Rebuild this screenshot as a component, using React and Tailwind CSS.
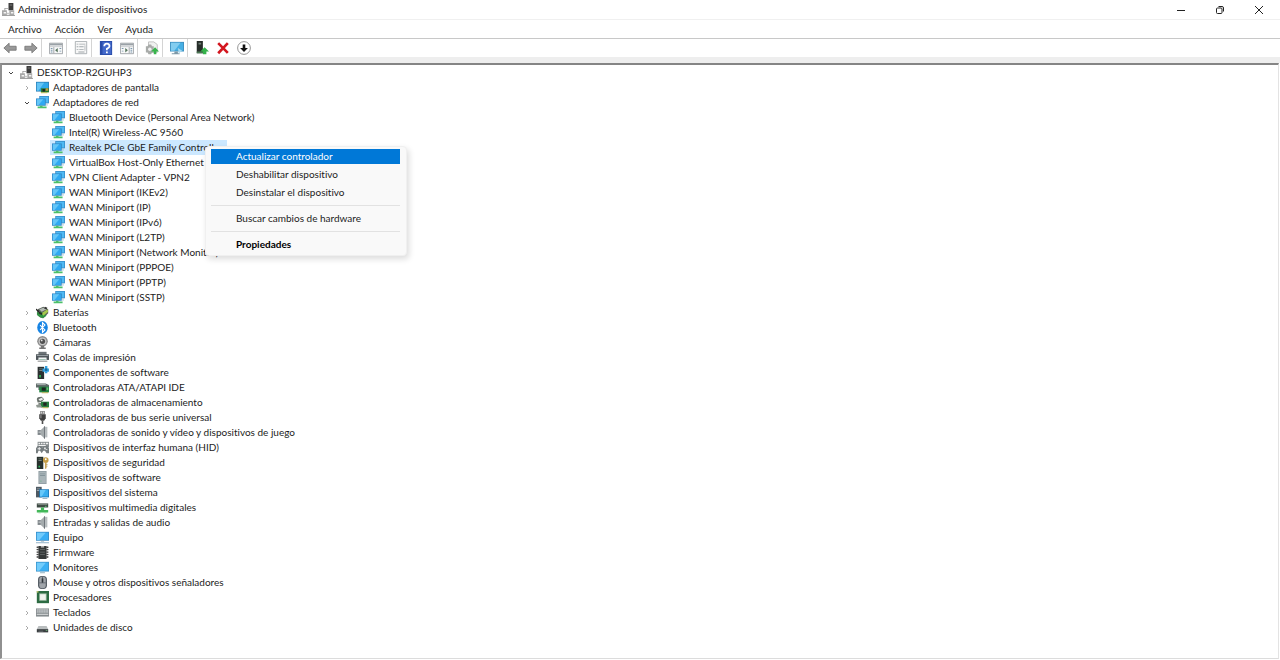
import React from 'react';

const NODES = [
  { label: 'Adaptadores de pantalla', icon: 'display' },
  {
    label: 'Adaptadores de red',
    icon: 'network',
    children: [
      'Bluetooth Device (Personal Area Network)',
      'Intel(R) Wireless-AC 9560',
      'Realtek PCIe GbE Family Controller',
      'VirtualBox Host-Only Ethernet Adapter',
      'VPN Client Adapter - VPN2',
      'WAN Miniport (IKEv2)',
      'WAN Miniport (IP)',
      'WAN Miniport (IPv6)',
      'WAN Miniport (L2TP)',
      'WAN Miniport (Network Monitor)',
      'WAN Miniport (PPPOE)',
      'WAN Miniport (PPTP)',
      'WAN Miniport (SSTP)',
    ],
  },
  { label: 'Baterías', icon: 'battery' },
  { label: 'Bluetooth', icon: 'bluetooth' },
  { label: 'Cámaras', icon: 'camera' },
  { label: 'Colas de impresión', icon: 'printer' },
  { label: 'Componentes de software', icon: 'component' },
  { label: 'Controladoras ATA/ATAPI IDE', icon: 'ide' },
  { label: 'Controladoras de almacenamiento', icon: 'storage' },
  { label: 'Controladoras de bus serie universal', icon: 'usb' },
  { label: 'Controladoras de sonido y vídeo y dispositivos de juego', icon: 'speaker' },
  { label: 'Dispositivos de interfaz humana (HID)', icon: 'hid' },
  { label: 'Dispositivos de seguridad', icon: 'security' },
  { label: 'Dispositivos de software', icon: 'software' },
  { label: 'Dispositivos del sistema', icon: 'system' },
  { label: 'Dispositivos multimedia digitales', icon: 'media' },
  { label: 'Entradas y salidas de audio', icon: 'speaker' },
  { label: 'Equipo', icon: 'computer' },
  { label: 'Firmware', icon: 'firmware' },
  { label: 'Monitores', icon: 'monitor' },
  { label: 'Mouse y otros dispositivos señaladores', icon: 'mouse' },
  { label: 'Procesadores', icon: 'cpu' },
  { label: 'Teclados', icon: 'keyboard' },
  { label: 'Unidades de disco', icon: 'disk' },
];

const SELECTED = 'Realtek PCIe GbE Family Controller';

const GLYPHS = {
  root: (
    <>
      <path d="M8 0h6v9H8z" fill="#3c3c3c" />
      <path d="M9.5 2h3v1h-3z" fill="#888" />
      <path d="M3 6h5v1H4v3H3z" fill="#999" />
      <path d="M0 9h6v6H0zM9 9h6v6H9z" fill="#a8a8a8" />
      <path d="M6 12h3v2H6z" fill="#c8c8c8" />
      <path d="M2 11h3v2H2zM11 11h3v2h-3z" fill="#f4f4f4" />
      <path d="M0 15h16v1H0z" fill="#8f8f8f" />
    </>
  ),
  display: (
    <>
      <path d="M0 1h16v12H0z" fill="#2f7fb5" />
      <path d="M1 2h14v10H1z" fill="#2fa8ea" />
      <path d="M1 2h9L3 12H1z" fill="#63c4f5" />
      <path d="M6 9h10v5H6z" fill="#267a35" />
      <path d="M8 10h3v3H8z" fill="#222" />
      <path d="M12 9h3v3h-3z" fill="#c4983c" />
      <path d="M6 14h8v1H6z" fill="#b8b13a" />
    </>
  ),
  network: (
    <>
      <path d="M4 0h12v9H4z" fill="#3a8fcb" />
      <path d="M5 1h10v7H5z" fill="#4fb9f3" />
      <path d="M0 3h12v9H0z" fill="#3186c4" />
      <path d="M1 4h10v7H1z" fill="#2fa9f2" />
      <path d="M1 4h8L3 11H1z" fill="#64c6f8" />
      <path d="M5 12h3v1h5v2H2v-2h3z" fill="#4cc06a" />
      <path d="M13 9h1v3h-1z" fill="#8fb3c8" />
    </>
  ),
  battery: (
    <>
      <path d="M2 4l7-3 6 3v5l-6 6-4-1-4-4z" fill="#5c635c" />
      <path d="M4 4l5-2 4 2-6 3z" fill="#b3bab3" />
      <path d="M1 8l5-1 7 5-5 3-6-3z" fill="#2f9442" />
      <path d="M7 9l7-5 1 3-6 5z" fill="#a6c94d" />
      <path d="M0 3l4 3-1 2-3-3z" fill="#222" />
      <path d="M4 7l4 2-1 2-4-2z" fill="#262a26" />
      <path d="M11 1l3 1-1 2-3-1z" fill="#333" />
    </>
  ),
  bluetooth: (
    <>
      <ellipse cx="8" cy="8" rx="6.5" ry="8" fill="#1784e4" />
      <path d="M5 5l6 6-3 3V2l3 3-6 6" fill="none" stroke="#fff" strokeWidth="1.4" />
    </>
  ),
  camera: (
    <>
      <circle cx="8" cy="6.5" r="6.5" fill="#8b8b8b" />
      <circle cx="8" cy="6.5" r="4.8" fill="#c4c4c4" />
      <circle cx="8" cy="6.5" r="3.2" fill="#505050" />
      <circle cx="7" cy="5.5" r="1.1" fill="#e8e8e8" />
      <path d="M6 12h4v2h2v2H4v-2h2z" fill="#747474" />
    </>
  ),
  printer: (
    <>
      <path d="M3 1h10v4H3z" fill="#6d7478" />
      <path d="M0 4h16v7H0z" fill="#50575b" />
      <path d="M1 5h14v1H1z" fill="#a8b0b4" />
      <path d="M3 8h10v5H3z" fill="#f2f5f6" />
      <path d="M4 10h8v1H4z" fill="#91b7a5" />
      <path d="M2 12h12v1H2z" fill="#777" />
    </>
  ),
  component: (
    <>
      <path d="M2 1h8v15H2z" fill="#2b3030" />
      <path d="M4 3h4v1H4zM4 5h4v1H4z" fill="#7d8888" />
      <path d="M4 11h2v3H4z" fill="#35bd58" />
      <path d="M11 0h3v3h2v4h-2v2h-3V7H8V3h3z" fill="#38a2df" />
      <path d="M11 3h3v3h-3z" fill="#17699c" />
    </>
  ),
  ide: (
    <>
      <path d="M0 3h12l4 2v6H3V8H0z" fill="#5e6968" />
      <path d="M1 4h11v1H1z" fill="#b5bfbd" />
      <path d="M4 7h12v7H4z" fill="#238442" />
      <path d="M7 8h5v4H7z" fill="#1d2522" />
      <path d="M13 8h2v3h-2z" fill="#69bb73" />
      <path d="M7 14h8v1H7z" fill="#b9a43a" />
    </>
  ),
  storage: (
    <>
      <path d="M1 4q0-3 6-3l3 3-3 3-5 1z" fill="#69716b" />
      <path d="M3 4l4-2 2 2-4 2z" fill="#f0f0f0" />
      <path d="M3 8l4 1v2H3z" fill="#7b837d" />
      <path d="M6 7h10v7H6z" fill="#267e3e" />
      <path d="M9 8h4v4H9z" fill="#202522" />
      <path d="M0 11l5-1 3 4H1z" fill="#909891" />
      <path d="M8 14h7v1H8z" fill="#c1a939" />
    </>
  ),
  usb: (
    <>
      <path d="M5 0h6v4H5z" fill="#8d8d8d" />
      <path d="M6 1h1v2H6zM9 1h1v2H9z" fill="#eee" />
      <path d="M4 4h8v5l-2 3H6l-2-3z" fill="#3f3f3f" />
      <path d="M5 5h2v4H5z" fill="#777" />
      <path d="M7 12h2v4H7z" fill="#4f4f4f" />
    </>
  ),
  speaker: (
    <>
      <path d="M2 5h4v6H2z" fill="#7f868a" />
      <path d="M6 5l5-5v16l-5-5z" fill="#a5abad" />
      <path d="M10 1l1-1v16l-1-1z" fill="#5f666a" />
      <path d="M11 1h3v13h-3z" fill="#b9bec0" />
      <path d="M3 7h3v1H3z" fill="#dde0e1" />
    </>
  ),
  hid: (
    <>
      <path d="M2 1h14v7H2z" fill="#858b8d" />
      <path d="M3 2h2v2H3zM6 2h2v2H6zM9 2h2v2H9zM12 2h3v2h-3zM3 5h9v1H3z" fill="#f2f2f2" />
      <path d="M0 9l2-3h4l2 2 2-2h4l2 3v6h-3l-2-3h-2l-2 3-2-3H3l-1 3H0z" fill="#777e80" />
      <path d="M2 9h4v1H2zM3.5 7.5h1v4h-1zM10 8h2v2h-2zM12 10h2v1h-2z" fill="#eee" />
    </>
  ),
  security: (
    <>
      <path d="M1 1h8v15H1z" fill="#28312d" />
      <path d="M3 3h4v1H3zM3 5h4v1H3z" fill="#75817b" />
      <path d="M3 12h2v2H3z" fill="#30b961" />
      <circle cx="12" cy="5" r="3.5" fill="#c49c45" />
      <circle cx="12" cy="4" r="1.1" fill="#fff" />
      <path d="M11 8h2v7l-2 1z" fill="#caa456" />
      <path d="M13 10h1v1h-1zM13 12h1v1h-1z" fill="#8c6a24" />
    </>
  ),
  software: (
    <>
      <path d="M3 0h10v16H3z" fill="#909da3" />
      <path d="M4 1h8v14H4z" fill="#a8b4b8" />
      <path d="M5 3h6v1H5zM5 5h6v1H5z" fill="#83939a" />
      <path d="M5 12h2v1H5z" fill="#78b592" />
    </>
  ),
  system: (
    <>
      <path d="M0 1h7v13H0z" fill="#4e5962" />
      <path d="M1 3h4v1H1zM1 5h4v1H1z" fill="#9ba6ae" />
      <path d="M4 4h12v10H4z" fill="#1a79b9" />
      <path d="M5 5h10v8H5z" fill="#36aef0" />
      <path d="M5 5h7l-5 8H5z" fill="#65c8fa" />
      <path d="M8 15h6v1H8z" fill="#88a5b6" />
    </>
  ),
  media: (
    <>
      <path d="M1 3h14v5H1z" fill="#3d4942" />
      <path d="M2 4h12v1H2z" fill="#8c9890" />
      <path d="M11 6h2v1h-2z" fill="#54d678" />
      <path d="M6 8h4v3h5v3H1v-3h5z" fill="#43b859" />
      <path d="M3 14h3v1H3zM10 14h3v1h-3z" fill="#8cd59a" />
    </>
  ),
  computer: (
    <>
      <path d="M0 1h16v11H0z" fill="#378ac5" />
      <path d="M1 2h14v9H1z" fill="#39adf4" />
      <path d="M1 2h11L4 11H1z" fill="#70cafb" />
      <path d="M6 12h4v1H6z" fill="#8ba4b2" />
      <path d="M0 14h16v1H0z" fill="#779fba" />
    </>
  ),
  firmware: (
    <>
      <path d="M3 0h10v16H3z" fill="#343838" />
      <path d="M1 1h2v1H1zM1 4h2v1H1zM1 7h2v1H1zM1 10h2v1H1zM1 13h2v1H1zM13 1h2v1h-2zM13 4h2v1h-2zM13 7h2v1h-2zM13 10h2v1h-2zM13 13h2v1h-2z" stroke="#555" strokeWidth=".5" />
      <path d="M6 0h4v2H6z" fill="#aaa" />
      <path d="M5 4h6v1H5zM5 7h6v1H5zM5 10h6v1H5z" fill="#686e6e" />
    </>
  ),
  monitor: (
    <>
      <path d="M0 1h16v12H0z" fill="#3b91c7" />
      <path d="M1 2h14v10H1z" fill="#3cb0f4" />
      <path d="M1 2h11L4 12H1z" fill="#72ccfb" />
      <path d="M5 14h6v1H5z" fill="#7aa0b4" />
    </>
  ),
  mouse: (
    <>
      <rect x="2.5" y="0" width="11" height="16" rx="4.5" fill="#525a62" />
      <rect x="4" y="1" width="8" height="14" rx="3.5" fill="#a0a5aa" />
      <path d="M7.5 1h1v7h-1zM4 8h8v1H4z" fill="#555d65" />
      <path d="M7 3h2v5H7z" fill="#30363c" />
    </>
  ),
  cpu: (
    <>
      <path d="M1 0h15v15H1z" fill="#2c6b42" />
      <path d="M4 3h9v9H4z" fill="#a9c2ae" />
      <path d="M5 4h7v7H5z" fill="#f0f3ee" />
      <path d="M1 0h2v2H1z" fill="#b5be65" />
    </>
  ),
  keyboard: (
    <>
      <path d="M0 3h16v10H0z" fill="#858b8e" />
      <path d="M1 4h14v5H1z" fill="#c0c4c6" />
      <path d="M1 6h14M1 8h14M3 4v5M6 4v5M9 4v5M12 4v5" stroke="#979da0" strokeWidth=".6" />
      <path d="M1 10h14v1H1z" fill="#dadddd" />
    </>
  ),
  disk: (
    <>
      <path d="M3 6h10l2 4H1z" fill="#b9bdbe" />
      <path d="M1 10h14v4H1z" fill="#383d3f" />
      <path d="M3 12h6v1H3z" fill="#737a7d" />
      <path d="M12 11h2v1h-2z" fill="#77bd82" />
    </>
  ),
};

const TOOLS = {
  back: <path d="M1 8l6-5.5v3.500h8v4.500H7V13.500z" fill="#999" stroke="#777" strokeWidth="1" />,
  forward: <path d="M15 8L9 2.500v3.500H1v4.500h8V13.500z" fill="#999" stroke="#777" strokeWidth="1" />,
  tree: (
    <>
      <path d="M.5 2.500h15v12H.5z" fill="#f8f8f8" stroke="#9a9fa3" />
      <path d="M1 3h14v2H1z" fill="#9aa1a7" />
      <path d="M1 6h14v1H1z" fill="#c5c9cc" />
      <path d="M5.500 7v7" stroke="#9a9fa3" />
      <path d="M2 8h2v1H2zM2 10h2v1H2zM2 12h2v1H2zM12 8h2v1h-2zM12 11h2v1h-2z" fill="#7c99af" />
      <path d="M10 8v5l-3-2.500z" fill="#53735b" />
    </>
  ),
  actions: (
    <>
      <path d="M.5 2.500h15v12H.5z" fill="#f8f8f8" stroke="#9a9fa3" />
      <path d="M1 3h14v2H1z" fill="#9aa1a7" />
      <path d="M1 6h14v1H1z" fill="#c5c9cc" />
      <path d="M10.500 7v7" stroke="#9a9fa3" />
      <path d="M2 8h2v1H2zM2 11h2v1H2zM12 8h2v1h-2zM12 10h2v1h-2zM12 12h2v1h-2z" fill="#7c99af" />
      <path d="M6 8v5l3-2.500z" fill="#53735b" />
    </>
  ),
  props: (
    <>
      <path d="M1.500 .5h13v14h-13z" fill="#f8f8f8" stroke="#a6abaf" />
      <path d="M3 3h2v1H3zM6 3h7v1H6zM3 6h2v1H3zM6 6h5v1H6zM3 9h2v1H3zM6 9h5v1H6zM5 12h7v1H5z" fill="#9fa6aa" />
      <path d="M12.500 5v6" stroke="#b0b5b8" />
    </>
  ),
  help: (
    <>
      <path d="M1 0h14v16H1z" fill="#2a4ca9" />
      <path d="M4 1h10v14H4z" fill="#4369ca" />
      <path d="M6 6q0-3 3-3t3 3q0 1.500-3 3v1.500" fill="none" stroke="#fff" strokeWidth="2" />
      <path d="M8 12h2v2H8z" fill="#fff" />
    </>
  ),
  scan: (
    <>
      <path d="M4 1h6l4 3v9H4z" fill="#f0f1f0" stroke="#bbb" />
      <path d="M1 6h2l1-2h3l1 2h2v7H8l-1 2H4l-1-2H1z" fill="#a8aba9" />
      <circle cx="5.500" cy="9.500" r="2" fill="#eee" />
      <path d="M11.500 7l4.500 5h-3v3h-3v-3H7z" fill="#37b44b" />
    </>
  ),
  remote: (
    <>
      <path d="M0 1h16v11H0z" fill="#3f8fbe" />
      <path d="M1 2h14v9H1z" fill="#46afe4" />
      <path d="M1 2h11l-7 9H1z" fill="#82cdf0" />
      <path d="M5 12h4v2h2v1H2v-1h3z" fill="#7d98a7" />
      <path d="M9 8l5 3-4 3z" fill="#a5d8ef" />
    </>
  ),
  update: (
    <>
      <path d="M2 0h7v14H2z" fill="#272d29" />
      <path d="M4 2h3v2H4z" fill="#718078" />
      <path d="M2 12h7v2H2z" fill="#4c7855" />
      <path d="M11 7l5 5h-3v3H9v-3H6z" fill="#34b34a" />
    </>
  ),
  remove: <path d="M2.500 2.500l11 11M13.500 2.500L2.500 14" stroke="#d3161f" strokeWidth="3" />,
  disable: (
    <>
      <circle cx="8" cy="8" r="7.300" fill="#fff" stroke="#888" strokeWidth="1" />
      <path d="M6.500 4h3v4h3L8 12.500 3.500 8h3z" fill="#111" />
    </>
  ),
};

const TOOL_GROUPS = [
  [['back', 'Atrás'], ['forward', 'Adelante']],
  [['tree', 'Mostrar u ocultar árbol de consola']],
  [['props', 'Propiedades']],
  [['help', 'Ayuda'], ['actions', 'Mostrar u ocultar panel de acciones']],
  [['scan', 'Buscar cambios de hardware']],
  [['remote', 'Equipo']],
  [['update', 'Actualizar controlador'], ['remove', 'Desinstalar el dispositivo'], ['disable', 'Deshabilitar dispositivo']],
];

const Icon = ({ name }) => (
  <svg viewBox="0 0 16 16" className="h-[13px] w-[13px] shrink-0" aria-hidden="true">
    {GLYPHS[name]}
  </svg>
);

const Chevron = ({ open, label }) => (
  <button type="button" aria-label={label} aria-expanded={open} className="mr-[5px] flex h-2 w-2 shrink-0 items-center justify-center">
    <svg viewBox="0 0 8 8" className="h-2 w-2" fill="none" stroke={open ? '#444' : '#aaa'}>
      <path d={open ? 'M2 3l2 2 2-2' : 'M3 2l2 2-2 2'} />
    </svg>
  </button>
);

const MenuItem = ({ children, active, bold }) => (
  <li className="flex h-[18px] items-center">
    <button
      type="button"
      className={`h-[15px] w-full pl-[25px] text-left leading-[15px] ${active ? 'bg-[#0078d7] text-white' : ''} ${bold ? 'font-bold text-black' : ''}`}
    >
      {children}
    </button>
  </li>
);

const MenuLine = () => (
  <li className="flex h-2 items-center">
    <hr className="w-full border-[#e2e2e2]" />
  </li>
);

const ContextMenu = () => (
  <ul className="absolute top-1.5 left-[155px] z-10 w-[202px] rounded-sm border border-[#f0f0f0] bg-[#f9f9f9] pr-1.5 pb-0.5 pl-[5px] shadow-[2px_3px_6px_rgba(0,0,0,0.14)]">
    <MenuItem active>Actualizar controlador</MenuItem>
    <MenuItem>Deshabilitar dispositivo</MenuItem>
    <MenuItem>Desinstalar el dispositivo</MenuItem>
    <MenuLine />
    <MenuItem>Buscar cambios de hardware</MenuItem>
    <MenuLine />
    <MenuItem bold>Propiedades</MenuItem>
  </ul>
);

const Device = ({ label }) => {
  const selected = label === SELECTED;
  return (
    <li className="relative flex">
      <div className={`flex h-[15px] items-center gap-1 pl-0.5 ${selected ? 'bg-[#cce8ff]' : ''}`}>
        <Icon name="network" />
        <span className="pr-1">{label}</span>
      </div>
      {selected && <ContextMenu />}
    </li>
  );
};

const Category = ({ node }) => (
  <li>
    <div className="flex h-[15px] items-center">
      <Chevron open={Boolean(node.children)} label={node.label} />
      <Icon name={node.icon} />
      <span className="ml-1">{node.label}</span>
    </div>
    {node.children && (
      <ul className="pl-[27px]">
        {node.children.map((label) => (
          <Device key={label} label={label} />
        ))}
      </ul>
    )}
  </li>
);

const TitleBar = () => (
  <header className="flex h-5 items-center justify-between border-b border-[#f0f0f0] px-0.5">
    <div className="flex items-center gap-[3px]">
      <Icon name="root" />
      <h1>Administrador de dispositivos</h1>
    </div>
    <div className="flex text-[#222]">
      <button type="button" aria-label="Minimizar" className="flex h-[19px] w-[39px] items-center justify-center">
        <svg viewBox="0 0 10 10" className="h-2.5 w-2.5" stroke="currentColor"><path d="M1 5.500h8" /></svg>
      </button>
      <button type="button" aria-label="Restaurar" className="flex h-[19px] w-[39px] items-center justify-center">
        <svg viewBox="0 0 10 10" className="h-2.5 w-2.5" fill="none" stroke="currentColor">
          <rect x="1.500" y="3" width="5.500" height="5.500" rx="1" />
          <path d="M3.500 1.500H7q1.500 0 1.500 1.500v3.500" />
        </svg>
      </button>
      <button type="button" aria-label="Cerrar" className="flex h-[19px] w-[39px] items-center justify-center">
        <svg viewBox="0 0 10 10" className="h-2.5 w-2.5" stroke="currentColor"><path d="M1 1l8 8M9 1L1 9" /></svg>
      </button>
    </div>
  </header>
);

const MenuBar = () => (
  <nav className="flex h-[19px] items-center gap-[13px] border-b border-[#c8c8c8] pl-2">
    {['Archivo', 'Acción', 'Ver', 'Ayuda'].map((item) => (
      <button key={item} type="button">{item}</button>
    ))}
  </nav>
);

const ToolBar = () => (
  <div className="flex h-[18px] items-center pl-[3px]" role="toolbar">
    {TOOL_GROUPS.map((group, i) => (
      <div key={i} className={`flex gap-[7px] ${i > 0 ? 'ml-[3px] border-l border-[#d4d4d4] pl-[7px]' : ''}`}>
        {group.map(([name, label]) => (
          <button key={label} type="button" aria-label={label} className="py-0.5">
            <svg viewBox="0 0 16 16" className="h-3.5 w-3.5">{TOOLS[name]}</svg>
          </button>
        ))}
      </div>
    ))}
  </div>
);

const App = () => (
  <div className="flex min-h-screen flex-col bg-white font-['Lato',sans-serif] text-[10px] leading-[15px] whitespace-nowrap text-[#1c1c1c] [font-variant-ligatures:none]">
    <TitleBar />
    <MenuBar />
    <ToolBar />
    <div className="h-1.5 bg-[#eeeeee]" />
    <main className="mr-px mb-px flex-1 border-t-2 border-r border-b border-l-2 border-t-[#858585] border-r-[#e3e3e3] border-b-[#dcdcdc] border-l-[#909090] pl-[5px]">
      <div className="flex h-[15px] items-center">
        <Chevron open label="DESKTOP-R2GUHP3" />
        <Icon name="root" />
        <span className="ml-1">DESKTOP-R2GUHP3</span>
      </div>
      <ul className="pl-4">
        {NODES.map((node) => (
          <Category key={node.label} node={node} />
        ))}
      </ul>
    </main>
  </div>
);

export default App;
